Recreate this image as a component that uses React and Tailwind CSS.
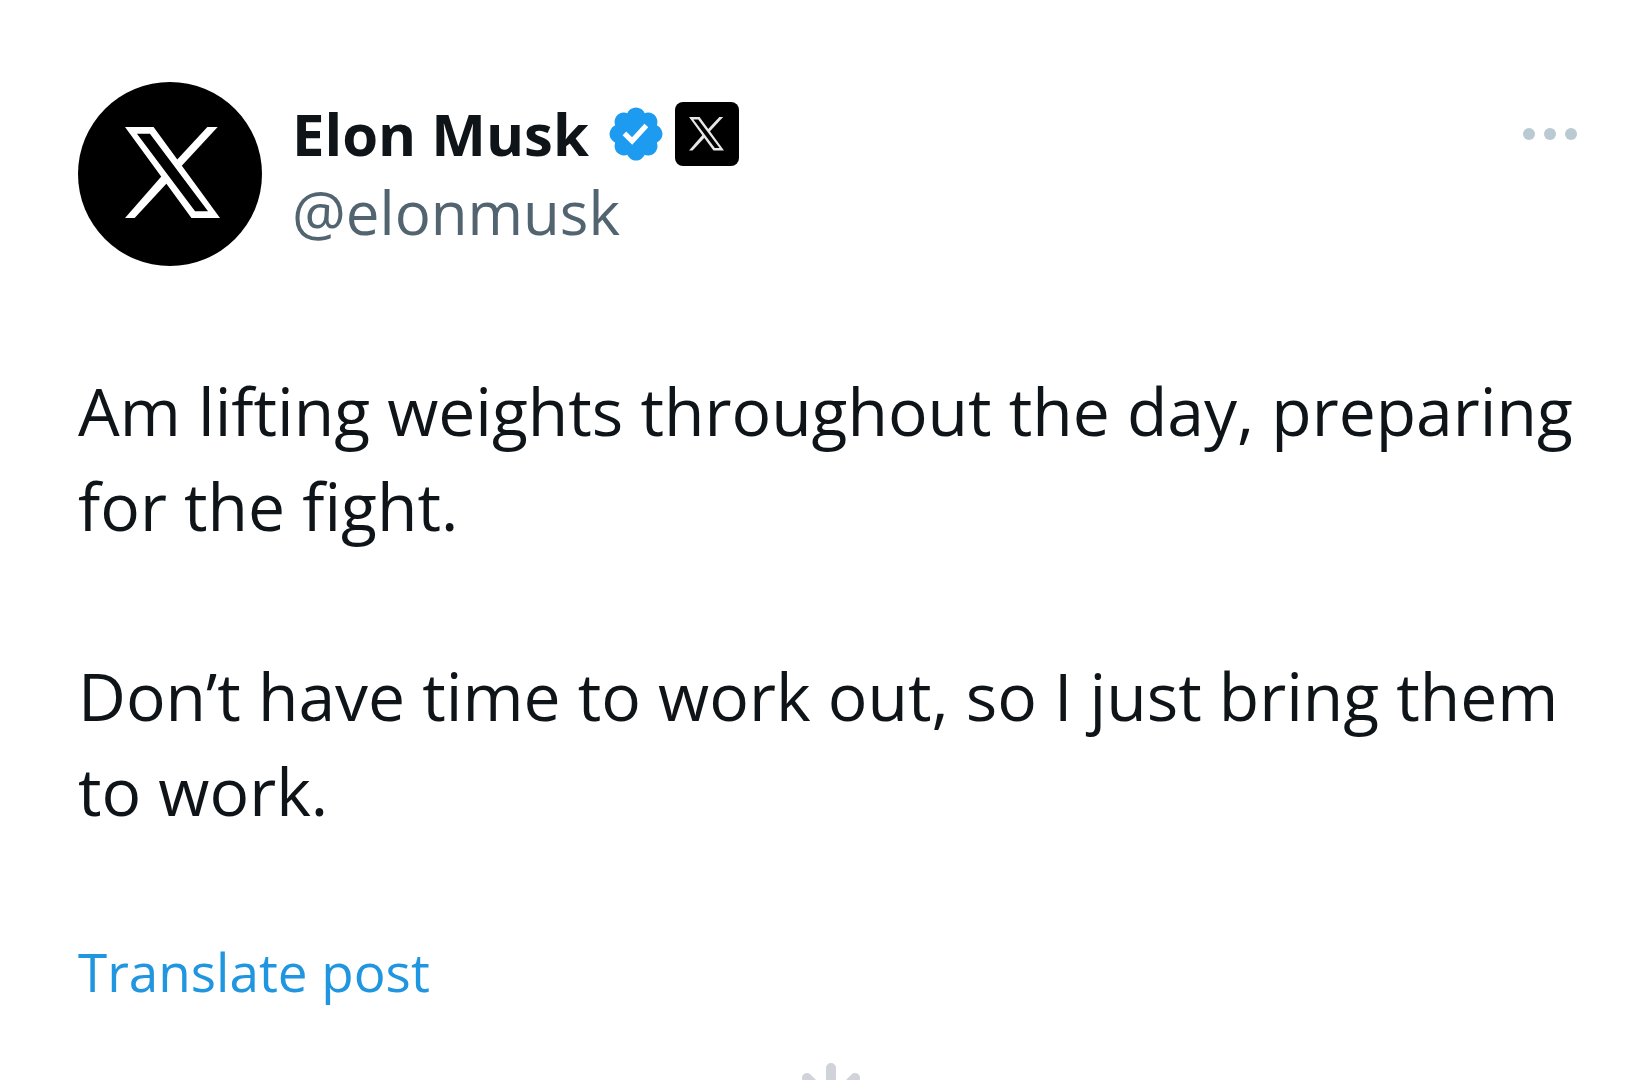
// Single post view: author header, post text, translate link and loading spinner

// ── Icons ───────────────────────────────────────────────────────────────────
function XLogo({ className }) {
  return (
    <svg viewBox="0 0 286 274" className={className} fill="currentColor" aria-hidden="true">
      <path
        fillRule="evenodd"
        d="M0 0H86L286 274H200ZM36 20L211 254H250L75 20Z"
      />
      <path d="M151 105L248 0H279L166 122Z" />
      <path d="M112 146L0 274H29L130 165Z" />
    </svg>
  );
}

function VerifiedIcon({ className }) {
  return (
    <svg viewBox="0 0 22 22" className={className} fill="currentColor" role="img" aria-label="Verified account">
      <path d="M20.396 11c-.018-.646-.215-1.275-.57-1.816-.354-.54-.852-.972-1.438-1.246.223-.607.27-1.264.14-1.897-.131-.634-.437-1.218-.882-1.687-.47-.445-1.053-.75-1.687-.882-.633-.13-1.29-.083-1.897.14-.273-.587-.704-1.086-1.245-1.44S11.647 1.62 11 1.604c-.646.017-1.273.213-1.813.568s-.969.854-1.24 1.44c-.608-.223-1.267-.272-1.902-.14-.635.13-1.22.436-1.69.882-.445.47-.749 1.055-.878 1.688-.13.633-.08 1.29.144 1.896-.587.274-1.087.705-1.443 1.245-.356.54-.555 1.17-.574 1.817.02.647.218 1.276.574 1.817.356.54.856.972 1.443 1.245-.224.606-.274 1.263-.144 1.896.13.634.433 1.218.877 1.688.47.443 1.054.747 1.687.878.633.132 1.29.084 1.897-.136.274.586.705 1.084 1.246 1.439.54.354 1.17.551 1.816.569.647-.016 1.276-.213 1.817-.567s.972-.854 1.245-1.44c.604.239 1.266.296 1.903.164.636-.132 1.22-.447 1.68-.907.46-.46.776-1.044.908-1.681s.075-1.299-.165-1.903c.586-.274 1.084-.705 1.439-1.246.354-.54.551-1.17.569-1.816zM9.662 14.85l-3.429-3.428 1.293-1.302 2.072 2.072 4.4-4.794 1.347 1.246z" />
    </svg>
  );
}

function MoreIcon({ className }) {
  return (
    <svg viewBox="0 0 54 12" className={className} fill="currentColor" aria-hidden="true">
      <circle cx="6" cy="6" r="6" />
      <circle cx="27" cy="6" r="6" />
      <circle cx="48" cy="6" r="6" />
    </svg>
  );
}

const SPOKES = [0, 45, 90, 135, 180, 225, 270, 315];

function Spinner({ className }) {
  return (
    <svg viewBox="0 0 78 78" className={className} role="img" aria-label="Loading">
      {SPOKES.map((angle) => (
        <line
          key={angle}
          x1="39"
          y1="5"
          x2="39"
          y2="21"
          stroke="currentColor"
          strokeWidth="10"
          strokeLinecap="round"
          transform={`rotate(${angle} 39 39)`}
        />
      ))}
    </svg>
  );
}

// ── Page ────────────────────────────────────────────────────────────────────
export default function App() {
  return (
    <main className="h-screen overflow-hidden bg-white pt-[82px] pr-[46px] pl-[78px] font-['Open_Sans',sans-serif] text-[#0f1419]">
      <article>
        <header className="flex items-start gap-[30px]">
          <div className="flex size-[184px] shrink-0 items-center justify-center rounded-full bg-black pb-1 pl-1 text-white">
            <XLogo className="w-[95px]" />
          </div>

          <div className="mt-3 flex-1">
            <div className="flex h-20 items-center">
              <h1 className="text-[58px] leading-[78px] font-bold">Elon Musk</h1>
              <VerifiedIcon className="ml-4 size-[62px] text-[#1d9bf0]" />
              <span className="ml-2 flex size-16 items-center justify-center rounded-lg bg-black text-[#e7e7e7]">
                <XLogo className="w-[35px]" />
              </span>
            </div>
            <p className="text-[60px] leading-[76px] text-[#536471]">@elonmusk</p>
          </div>

          <button type="button" aria-label="More" className="mt-3 mr-1.5 flex h-20 items-center text-[#b9cad3]">
            <MoreIcon className="w-[54px]" />
          </button>
        </header>

        <div className="mt-[97px] text-[66px] leading-[95px] whitespace-pre-line">
          {"Am lifting weights throughout the day, preparing for the fight.\n\nDon’t have time to work out, so I just bring them to work."}
        </div>

        <a href="#translate" className="mt-[98px] block w-fit text-[53px] leading-[72px] text-[#2196e0]">
          Translate post
        </a>
      </article>

      <div className="mt-[55px] flex justify-center text-[#d1d3da]">
        <Spinner className="size-[78px]" />
      </div>
    </main>
  );
}
